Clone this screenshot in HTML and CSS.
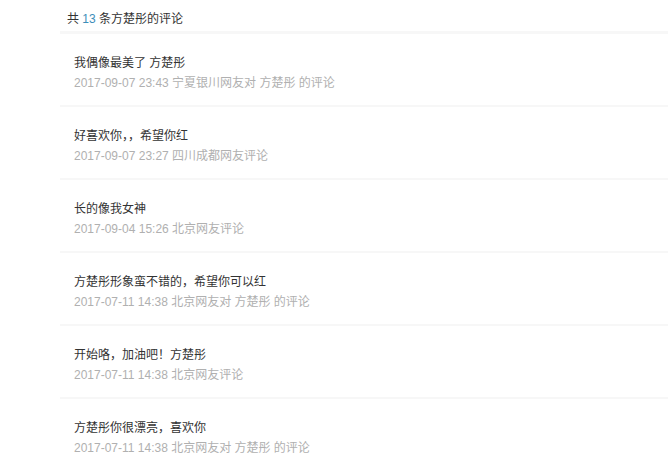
FILE: index.html
```html
<!DOCTYPE html>
<html lang="zh-CN">
<head>
  <meta charset="UTF-8"/>
  <title>评论</title>
  <link rel="stylesheet" href="styles.css">
</head>
<body>
  <div class="comments">
    <div class="comments-head">共 <span class="count">13</span> 条方楚彤的评论</div>
    <div class="comment">
      <p class="comment-text">我偶像最美了 方楚彤</p>
      <p class="comment-meta">2017-09-07 23:43 宁夏银川网友对 方楚彤 的评论</p>
    </div>
    <div class="comment">
      <p class="comment-text">好喜欢你，，希望你红</p>
      <p class="comment-meta">2017-09-07 23:27 四川成都网友评论</p>
    </div>
    <div class="comment">
      <p class="comment-text">长的像我女神</p>
      <p class="comment-meta">2017-09-04 15:26 北京网友评论</p>
    </div>
    <div class="comment">
      <p class="comment-text">方楚彤形象蛮不错的，希望你可以红</p>
      <p class="comment-meta">2017-07-11 14:38 北京网友对 方楚彤 的评论</p>
    </div>
    <div class="comment">
      <p class="comment-text">开始咯，加油吧！方楚彤</p>
      <p class="comment-meta">2017-07-11 14:38 北京网友评论</p>
    </div>
    <div class="comment">
      <p class="comment-text">方楚彤你很漂亮，喜欢你</p>
      <p class="comment-meta">2017-07-11 14:38 北京网友对 方楚彤 的评论</p>
    </div>
  </div>
</body>
</html>
```
FILE: styles.css
```css
* {
  margin: 0;
  padding: 0;
  box-sizing: border-box;
}

body {
  font-family: 'Liberation Sans', 'Noto Sans CJK SC', sans-serif;
  font-size: 12px;
  background: #fff;
  color: #333;
  overflow: hidden;
}

.comments {
  padding-left: 60px;
}

.comments-head {
  padding: 9px 0 2px 7px;
  line-height: 20px;
  color: #333;
  border-bottom: 3px solid #f7f7f7;
}

.count {
  color: #3d8eb9;
}

.comment {
  padding: 19px 0 12px 14px;
  border-bottom: 2px solid #f7f7f7;
}

.comment-text {
  line-height: 20px;
  color: #333;
}

.comment-meta {
  line-height: 20px;
  color: #b0b0b0;
}
```
